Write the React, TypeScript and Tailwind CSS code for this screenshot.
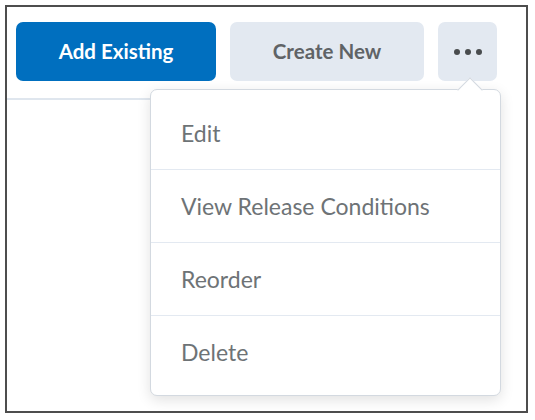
import { useState } from "react";

const ITEMS = ["Edit", "View Release Conditions", "Reorder", "Delete"];

export default function App() {
  const [open] = useState(true);

  return (
    <div className="min-h-screen bg-white p-[5px] font-['Lato','Liberation_Sans',sans-serif]">
      <div className="relative h-[408px] w-[523px] border-2 border-[#4d4d4d] bg-white">
        {/* Toolbar */}
        <div className="flex gap-[14px] pl-[9px] pt-[15px]">
          <button className="h-[59px] w-[200px] rounded-[7px] bg-[#006fbf] text-[20.5px] font-bold text-white">
            Add Existing
          </button>
          <button className="h-[59px] w-[194px] rounded-[7px] bg-[#e3e9f1] text-[20.5px] font-bold text-[#5f6366]">
            Create New
          </button>
          <button className="flex h-[59px] w-[59px] items-center justify-center gap-[5px] rounded-[7px] bg-[#e3e9f1]">
            <span className="h-[6px] w-[6px] rounded-full bg-[#494c4e]" />
            <span className="h-[6px] w-[6px] rounded-full bg-[#494c4e]" />
            <span className="h-[6px] w-[6px] rounded-full bg-[#494c4e]" />
          </button>
        </div>
        <div className="mr-[30px] mt-[17px] h-[2px] bg-[#dfe6ee]" />

        {/* Dropdown menu */}
        {open && (
          <div className="absolute left-[143px] top-[82px] w-[351px] rounded-[7px] border border-[#d3d9e0] bg-white py-[7px] shadow-[0_4px_14px_rgba(0,0,0,0.12)]">
            <div className="absolute -top-[9px] left-[310px] h-[18px] w-[18px] rotate-45 border-l border-t border-[#d3d9e0] bg-white" />
            {ITEMS.map((label, i) => (
              <div key={label}>
                {i > 0 && <div className="h-px bg-[#e3e9f1]" />}
                <div className="flex h-[72px] items-center pl-[30px] text-[23px] text-[#6e7376]">
                  {label}
                </div>
              </div>
            ))}
          </div>
        )}
      </div>
    </div>
  );
}
